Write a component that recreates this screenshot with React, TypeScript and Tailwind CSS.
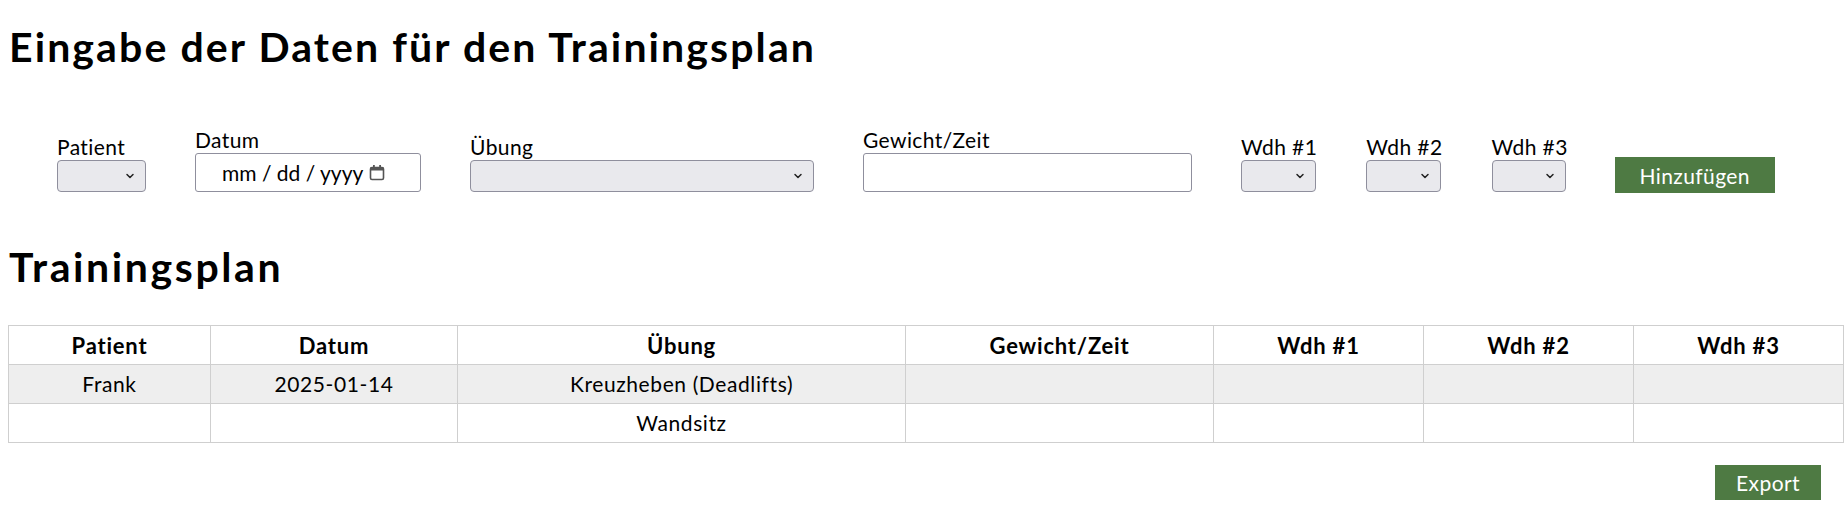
import { ChevronDown } from "lucide-react";

const font = { fontFamily: "Lato, 'Noto Sans', sans-serif" };

function Select({ w }: { w: string }) {
  return (
    <div className={`${w} h-[32px] rounded-[4px] border border-[#8f8f9d] bg-[#e9e9ed] flex items-center justify-end pr-[9px]`}>
      <ChevronDown className="w-[12px] h-[12px] text-[#222]" strokeWidth={3} />
    </div>
  );
}

function Field({ label, children }: { label: string; children: React.ReactNode }) {
  return (
    <div className="flex flex-col">
      <span className="text-[21px] leading-[26px] tracking-[0.4px] text-black">{label}</span>
      {children}
    </div>
  );
}

const cols = [
  { h: "Patient", w: "w-[202px]" },
  { h: "Datum", w: "w-[247px]" },
  { h: "Übung", w: "w-[448px]" },
  { h: "Gewicht/Zeit", w: "w-[308px]" },
  { h: "Wdh #1", w: "w-[210px]" },
  { h: "Wdh #2", w: "w-[210px]" },
  { h: "Wdh #3", w: "w-[210px]" },
];

const rows = [
  ["Frank", "2025-01-14", "Kreuzheben (Deadlifts)", "", "", "", ""],
  ["", "", "Wandsitz", "", "", "", ""],
];

export default function App() {
  return (
    <div className="w-[1847px] h-[505px] bg-white text-black overflow-hidden" style={font}>
      <h1 className="ml-[9px] pt-[22px] text-[41px] leading-[50px] tracking-[2.1px] font-bold">Eingabe der Daten für den Trainingsplan</h1>

      <div className="mt-[55px] ml-[57px] flex items-end gap-[49px]">
        <Field label="Patient"><Select w="w-[89px]" /></Field>
        <Field label="Datum">
          <div className="w-[226px] h-[39px] rounded-[3px] border border-[#8f8f9d] bg-white flex items-center pl-[26px] gap-[6px] text-[21px]">
            <span>mm / dd / yyyy</span>
            <svg width="16" height="17" viewBox="0 0 16 17" className="text-[#555]">
              <rect x="1.5" y="3.5" width="13" height="12" rx="1.5" fill="none" stroke="currentColor" strokeWidth="1.6" />
              <rect x="1.5" y="3.5" width="13" height="3" fill="currentColor" />
              <rect x="4" y="1" width="1.8" height="3.5" fill="currentColor" />
              <rect x="10.2" y="1" width="1.8" height="3.5" fill="currentColor" />
            </svg>
          </div>
        </Field>
        <Field label="Übung"><Select w="w-[344px]" /></Field>
        <Field label="Gewicht/Zeit">
          <div className="w-[329px] h-[39px] rounded-[3px] border border-[#8f8f9d] bg-white" />
        </Field>
        <Field label="Wdh #1"><Select w="w-[75px]" /></Field>
        <Field label="Wdh #2"><Select w="w-[75px]" /></Field>
        <Field label="Wdh #3"><Select w="w-[74px]" /></Field>
        <button className="w-[160px] h-[36px] mb-[-1px] ml-[-2px] bg-[#4e7a43] text-white text-[21px] tracking-[0.4px] leading-none">Hinzufügen</button>
      </div>

      <h2 className="ml-[9px] mt-[50px] text-[41px] leading-[50px] tracking-[2.6px] font-bold">Trainingsplan</h2>

      <table className="ml-[8px] mt-[33px] border-collapse table-fixed w-[1835px]">
        <thead>
          <tr>
            {cols.map(c => (
              <th key={c.h} className={`${c.w} h-[39px] border border-[#cfcfcf] text-[22px] tracking-[0.8px] font-bold text-center p-0`}>{c.h}</th>
            ))}
          </tr>
        </thead>
        <tbody>
          {rows.map((r, i) => (
            <tr key={i} className={i === 0 ? "bg-[#eeeeee]" : "bg-white"}>
              {r.map((v, j) => (
                <td key={j} className="h-[39px] border border-[#cfcfcf] text-[21px] tracking-[0.6px] text-center p-0">{v}</td>
              ))}
            </tr>
          ))}
        </tbody>
      </table>

      <div className="flex justify-end pr-[26px] mt-[22px]">
        <button className="w-[106px] h-[35px] bg-[#4e7a43] text-white text-[21px] tracking-[0.4px] leading-none">Export</button>
      </div>
    </div>
  );
}
